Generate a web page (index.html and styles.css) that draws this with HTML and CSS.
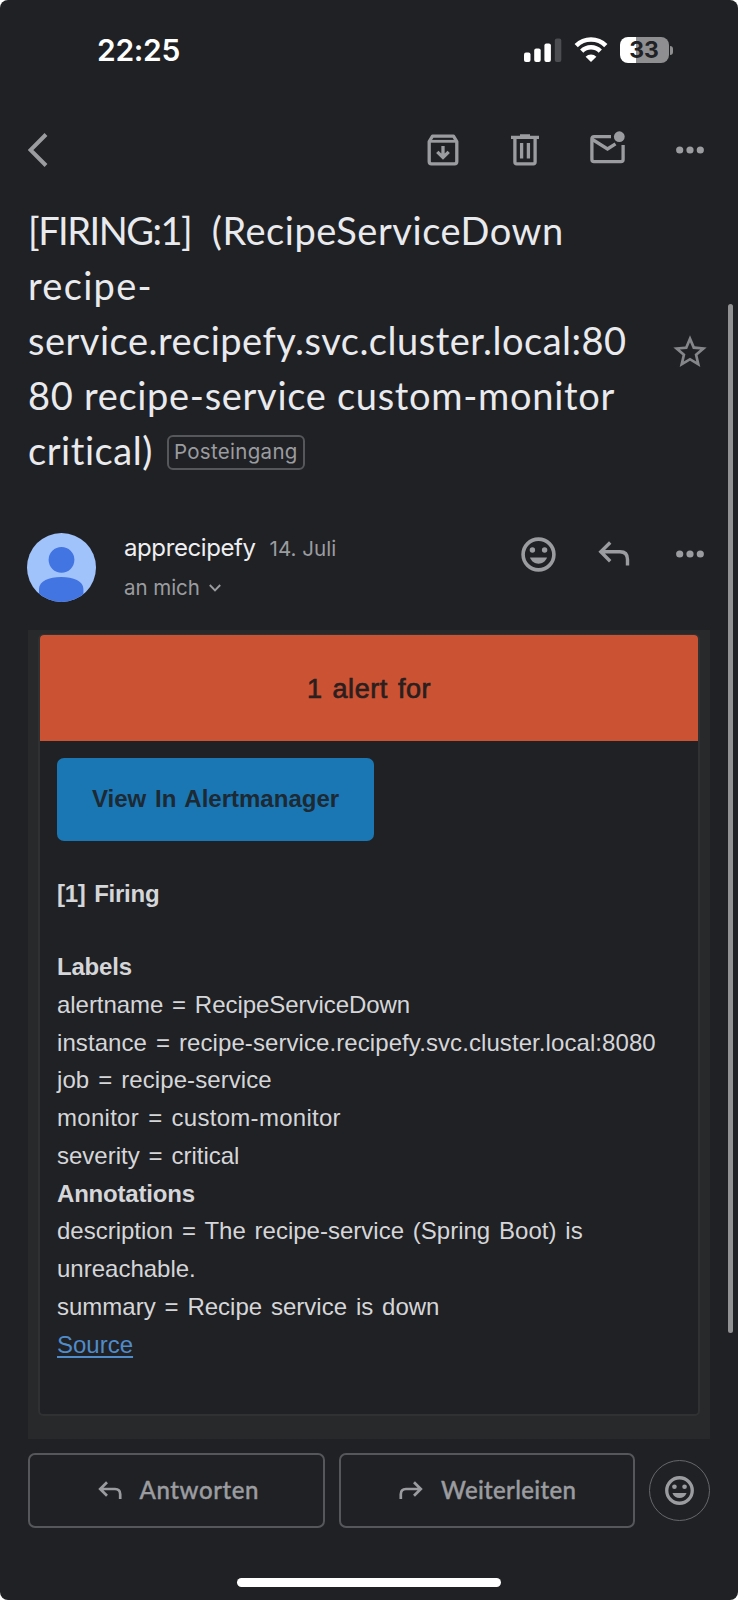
FILE: index.html
```html
<!DOCTYPE html>
<html lang="de">
<head>
<meta charset="utf-8">
<title>[FIRING:1] RecipeServiceDown</title>
<link rel="stylesheet" href="styles.css">
</head>
<body>
<div class="screen">
  <header class="status">
    <span class="clock">22:25</span>
    <div class="status-icons">
      <svg width="38" height="26" viewBox="0 0 38 26">
        <g fill="#fff"><rect y="15.5" width="6.5" height="9.5" rx="2"/><rect x="10.2" y="11.5" width="6.5" height="13.5" rx="2"/><rect x="20.4" y="6.5" width="6.5" height="18.5" rx="2"/></g>
        <rect x="30.8" y="1.5" width="6.5" height="23.5" rx="2" fill="#4c4d50"/>
      </svg>
      <svg class="wifi" width="34" height="26" viewBox="0 0 34 26">
        <path d="M2.2 8.6a21 21 0 0 1 29.6 0M7.7 14.1a13.2 13.2 0 0 1 18.6 0" fill="none" stroke="#fff" stroke-width="4.6"/>
        <path d="M17 25l-5.4-5.2a7.6 7.6 0 0 1 10.8 0z" fill="#fff"/>
      </svg>
      <div class="battery"><span>33</span></div>
      <i class="battery-nub"></i>
    </div>
  </header>

  <nav class="toolbar">
    <svg class="back" width="20" height="34" viewBox="0 0 20 34"><path d="M18 1.5L2.5 17l15.500 15.500" fill="none" stroke="currentColor" stroke-width="4"/></svg>
    <svg class="archive" width="32" height="32" viewBox="0 0 32 32" fill="none" stroke="currentColor" stroke-width="3.3">
      <path d="M2.200 7.500L5.500 2.200H26.500L29.800 7.500V27.500Q29.800 29.800 27.500 29.800H4.500Q2.200 29.800 2.200 27.500Z" stroke-linejoin="round"/><path d="M3 7.300H29" stroke-width="2.800"/><path d="M16 12V22M10.300 17.800L16 23.500l5.700-5.700"/>
    </svg>
    <svg class="trash" width="28" height="32" viewBox="0 0 28 32" fill="none" stroke="currentColor" stroke-width="3.300">
      <path d="M0 3.300H28M9 2H19"/><path d="M3.900 4V28Q3.900 29.800 5.700 29.800H22.300Q24.100 29.800 24.100 28V4"/><path d="M10.600 9V24.500M17.400 9V24.500"/>
    </svg>
    <svg class="mail" width="36" height="34" viewBox="0 0 36 34" fill="none" stroke="currentColor" stroke-width="3.300">
      <path d="M21 5.700H4Q1.900 5.700 1.900 7.800V28.500Q1.900 30.600 4 30.600H31Q33.100 30.600 33.100 28.500V14"/><path d="M2.500 8.500L17.500 18l8-5.200"/><circle cx="29.300" cy="5.700" r="5.400" fill="currentColor" stroke="none"/>
    </svg>
    <svg class="dots" width="28" height="8" viewBox="0 0 28 8" fill="currentColor"><circle cx="3.700" cy="4" r="3.600"/><circle cx="14" cy="4" r="3.600"/><circle cx="24.300" cy="4" r="3.600"/></svg>
  </nav>

  <section class="subject">
    <h1><span class="s0">[FIRING:1]</span><span class="s1">&nbsp; (RecipeServiceDown</span><br><span class="s2">recipe-</span><br><span class="s3">service.recipefy.svc.cluster.local:80</span><br><span class="s4">80 recipe-service custom-monitor</span><br><span class="s5">critical)</span><span class="chip">Posteingang</span></h1>
    <svg class="star" width="40" height="40" viewBox="0 0 24 24" fill="currentColor"><path d="M22 9.240l-7.190-.620L12 2 9.190 8.630 2 9.240l5.460 4.730L5.820 21 12 17.270 18.180 21l-1.630-7.030L22 9.240zM12 15.400l-3.760 2.270 1-4.280-3.320-2.880 4.380-.380L12 6.100l1.710 4.040 4.380.380-3.320 2.880 1 4.280L12 15.400z"/></svg>
  </section>

  <section class="sender">
    <svg class="avatar" width="69" height="69" viewBox="0 0 69 69">
      <defs><clipPath id="disc"><circle cx="34.500" cy="34.500" r="34.500"/></clipPath></defs>
      <g clip-path="url(#disc)"><rect width="69" height="69" fill="#a1c3fc"/><circle cx="34.500" cy="26.800" r="12.900" fill="#4274e2"/><path d="M12 69V56C12 48 22 44 34.200 44S56.400 48 56.400 56V69Z" fill="#4274e2"/></g>
    </svg>
    <div class="who">
      <div class="line"><span class="name">apprecipefy</span><span class="date">14. Juli</span></div>
      <div class="line to"><span>an mich</span><svg width="12" height="8" viewBox="0 0 12 8"><path d="M.8 1L6 6.300 11.200 1" fill="none" stroke="currentColor" stroke-width="1.900"/></svg></div>
    </div>
    <div class="sender-actions">
      <svg width="35" height="35" viewBox="0 0 35 35" fill="currentColor"><circle cx="17.500" cy="17.500" r="15.400" fill="none" stroke="currentColor" stroke-width="3.600"/><circle cx="11.400" cy="13" r="2.700"/><circle cx="23.600" cy="13" r="2.700"/><path d="M9 20.500H26C24.600 24.400 21.400 26.700 17.500 26.700S10.400 24.400 9 20.500Z"/></svg>
      <svg width="32" height="26" viewBox="0 0 32 26" fill="none" stroke="currentColor" stroke-width="3.400"><path d="M12.200 1.500L2.800 10.800l9.400 9.500M3 10.800H22Q29.500 10.800 29.500 18.500V24.500"/></svg>
      <svg width="28" height="8" viewBox="0 0 28 8" fill="currentColor"><circle cx="3.700" cy="4" r="3.600"/><circle cx="14" cy="4" r="3.600"/><circle cx="24.300" cy="4" r="3.600"/></svg>
    </div>
  </section>

  <main class="mail-body">
    <article class="card">
      <div class="banner"><span>1 alert for</span></div>
      <div class="content">
        <a class="cta">View In Alertmanager</a>
        <p class="firing"><b>[1] Firing</b></p>
        <p class="details"><b class="lb">Labels</b><br>
        <span class="w0">alertname = RecipeServiceDown</span><br>
        <span class="w1">instance = recipe-service.recipefy.svc.cluster.local:8080</span><br>
        <span class="w1">job = recipe-service</span><br>
        <span class="w2">monitor = custom-monitor</span><br>
        <span>severity = critical</span><br>
        <b class="lb">Annotations</b><br>
        description = The recipe-service (Spring Boot) is<br>
        unreachable.<br>
        summary = Recipe service is down<br>
        <a class="source">Source</a></p>
      </div>
    </article>
  </main>

  <footer class="actions">
    <div class="btn reply"><svg width="24" height="19" viewBox="0 0 24 19" fill="none" stroke="currentColor" stroke-width="2.700"><path d="M9 1.200L2.200 8 9 14.800M2.400 8H17Q22.200 8 22.200 13.200V18"/></svg><span>Antworten</span></div>
    <div class="btn forward"><svg width="24" height="19" viewBox="0 0 24 19" fill="none" stroke="currentColor" stroke-width="2.700"><path d="M15 1.200L21.800 8 15 14.800M21.600 8H7Q1.800 8 1.800 13.200V18"/></svg><span>Weiterleiten</span></div>
    <div class="react"><svg width="29" height="29" viewBox="0 0 35 35" fill="currentColor"><circle cx="17.500" cy="17.500" r="15.400" fill="none" stroke="currentColor" stroke-width="4"/><circle cx="11.400" cy="13" r="2.800"/><circle cx="23.600" cy="13" r="2.800"/><path d="M9 20.500H26C24.600 24.400 21.400 26.700 17.500 26.700S10.400 24.400 9 20.500Z"/></svg></div>
  </footer>
  <div class="home"></div>
  <div class="scrollbar"></div>
</div>
</body>
</html>
```
FILE: styles.css
```css
* { box-sizing: border-box; }
html { background: #fff; }
body { margin: 0; }
svg { display: block; flex: none; }
p, h1 { margin: 0; }

.screen {
  position: relative;
  width: 738px;
  height: 1600px;
  overflow: hidden;
  display: flex;
  flex-direction: column;
  border-radius: 8px;
  background: #202124;
  color: #9b9ca0;
  font-family: Inter, "Liberation Sans", sans-serif;
}

/* Status bar */
.status {
  height: 100px;
  padding: 37px 65px 0 97px;
  display: flex;
  justify-content: space-between;
  align-items: flex-start;
}
.clock { color: #fff; font-size: 30px; font-weight: 600; line-height: 27px; letter-spacing: -.3px; }
.status-icons { display: flex; align-items: center; }
.wifi { margin-left: 12px; }
.battery {
  width: 49px;
  height: 26px;
  margin-left: 12px;
  border-radius: 8px;
  background: linear-gradient(90deg, #fff 16px, #8f8f91 16px);
  color: #202124;
  font-size: 23px;
  font-weight: 700;
  line-height: 26px;
  text-align: center;
}
.battery-nub { width: 3px; height: 9px; margin-left: 1.500px; border-radius: 0 4px 4px 0; background: #8f8f91; }

/* Toolbar */
.toolbar { height: 99px; padding: 0 34px 0 28px; display: flex; align-items: center; }
.archive { margin-left: 379px; }
.trash { margin-left: 52px; }
.mail { margin-left: 51px; margin-top: -4px; }
.dots { margin-left: auto; }

/* Subject */
.subject { height: 295px; padding: 4px 28px 0; display: flex; justify-content: space-between; }
.subject h1 {
  color: #e9eaee;
  font: 400 38px/55px Lato, sans-serif;
  white-space: nowrap;
}
.s0 { letter-spacing: -1.500px; }
.s1 { letter-spacing: .540px; }
.s2 { letter-spacing: 1.300px; }
.s3 { letter-spacing: .5px; }
.s4 { letter-spacing: .7px; }
.s5 { letter-spacing: .540px; }
.chip {
  display: inline-flex;
  align-items: center;
  justify-content: center;
  width: 138px;
  height: 35px;
  margin-left: 14px;
  vertical-align: 5.800px;
  border: 2px solid #56575a;
  border-radius: 6px;
  color: #9b9ca0;
  font: 400 20.500px/30px Inter, sans-serif;
  letter-spacing: .3px;
}
.star { margin: 129px 0 0 0; color: #85868a; }

/* Sender */
.sender { height: 136px; padding: 39px 34px 0 27px; display: flex; align-items: flex-start; }
.who { margin-left: 28px; }
.line { display: flex; align-items: baseline; line-height: 30px; }
.name { width: 145.500px; color: #eeeff2; font-size: 24px; letter-spacing: -.4px; }
.date { font-size: 20.600px; }
.to { margin-top: 9px; gap: 9px; align-items: center; font-size: 20.500px; letter-spacing: -.05px; }
.sender-actions { height: 35px; margin: 3.500px 0 0 auto; display: flex; align-items: center; }
.sender-actions svg + svg { margin-left: 42px; }
.sender-actions svg + svg + svg { margin-left: 46px; }

/* Mail */
.mail-body {
  width: 682px;
  height: 809px;
  margin-left: 28px;
  padding: 4px 10px 23px;
  background: #28292b;
}
.card {
  height: 782px;
  border: 2px solid #303133;
  border-top-width: 1px;
  border-radius: 5px;
  background: #202124;
  color: #d5d6d9;
  font-family: "Liberation Sans", Arial, sans-serif;
  font-size: 24px;
  word-spacing: 2.200px;
}
.banner {
  height: 106px;
  display: flex;
  align-items: center;
  justify-content: center;
  border-radius: 4px 4px 0 0;
  background: #cb5233;
  color: #2a1e1e;
  font-size: 27px;
  letter-spacing: .550px;
  word-spacing: 2px;
}
.banner span { padding-top: 3px; -webkit-text-stroke: .7px #2a1e1e; }
.content { padding: 17px 17px 0; }
.cta {
  display: block;
  width: 317px;
  height: 83px;
  border-radius: 7px;
  background: #1a77b4;
  color: #1d2933;
  font-weight: 700;
  line-height: 82px;
  text-align: center;
}
.firing { margin-top: 34px; line-height: 38px; letter-spacing: -.250px; }
.details { margin-top: 35px; line-height: 37.760px; white-space: nowrap; }
.lb { letter-spacing: -.2px; }
.w0 { letter-spacing: -.050px; }
.w1 { letter-spacing: .080px; }
.w2 { letter-spacing: .280px; }
.source { color: #508bca; text-decoration: underline; text-decoration-thickness: 2px; text-underline-offset: 3px; }

/* Bottom actions */
.actions { margin-top: 13.500px; padding: 0 28px; display: flex; align-items: center; gap: 14px; }
.btn {
  width: 296.500px;
  height: 75.500px;
  display: flex;
  align-items: center;
  border: 2px solid #56575a;
  border-radius: 7px;
  font: 500 24px/30px Lato, sans-serif;
}
.btn span { margin-left: 18px; letter-spacing: .6px; -webkit-text-stroke: .4px #9b9ca0; }
.reply { padding-left: 67.500px; }
.forward { padding-left: 58.500px; }
.forward span { letter-spacing: .330px; }
.react {
  width: 61px;
  height: 61px;
  display: flex;
  align-items: center;
  justify-content: center;
  border: 1.500px solid #66676a;
  border-radius: 50%;
}
.home { width: 264px; height: 9px; margin: 49.500px 0 0 237px; border-radius: 5px; background: #fff; }

/* Overlay scroll indicator */
.scrollbar {
  position: absolute;
  top: 304px;
  right: 5px;
  width: 5.500px;
  height: 1029px;
  border-radius: 3px;
  background: #919194;
}
```
